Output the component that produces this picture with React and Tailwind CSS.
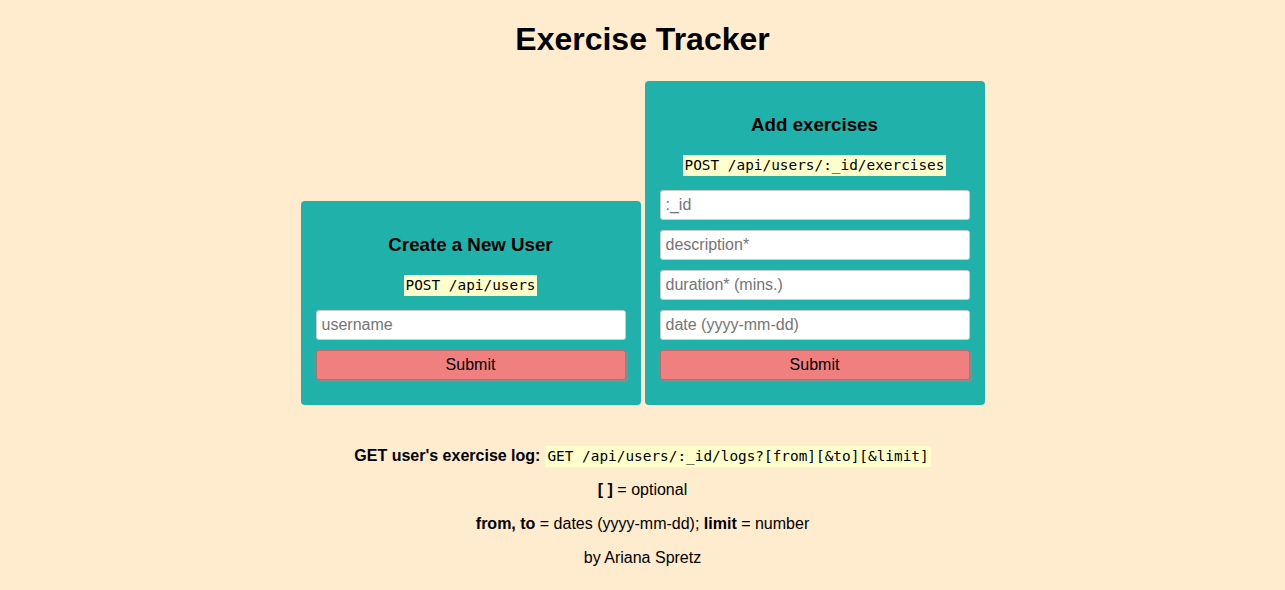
import React from 'react';

const sans = { fontFamily: '"Liberation Sans", Arial, sans-serif' };

function Code({ children }) {
  return (
    <code className="block bg-[#ffffcc] px-[2px] h-[21px] leading-[21px] text-[14.4px] text-black font-['DejaVu_Sans_Mono',monospace]">
      {children}
    </code>
  );
}

function Field({ placeholder }) {
  return (
    <input
      type="text"
      placeholder={placeholder}
      className="block w-[310px] h-[30px] px-[5px] bg-white border border-[#ccc] rounded-[3px] text-[16px] text-black placeholder:text-[#757575] outline-none"
      style={sans}
    />
  );
}

function SubmitButton() {
  return (
    <button
      type="button"
      className="block w-[310px] h-[30px] bg-[#f08080] rounded-[3px] text-[16px] text-black shadow-[2px_2px_0_#8a8a8a] border border-[#c06a6a]"
      style={sans}
    >
      Submit
    </button>
  );
}

function Card({ title, endpoint, fields }) {
  return (
    <div className="w-[340px] bg-[#20b2aa] rounded-[4px] pt-[33px] pb-[25px] px-[15px] flex flex-col items-center">
      <h3 className="text-[18.72px] font-bold leading-[22px] text-black">{title}</h3>
      <div className="mt-[19px] flex">
        <Code>{endpoint}</Code>
      </div>
      <div className="mt-[14px] flex flex-col gap-[10px]">
        {fields.map((f) => (
          <Field key={f} placeholder={f} />
        ))}
        <SubmitButton />
      </div>
    </div>
  );
}

export default function App() {
  return (
    <div className="min-h-[590px] bg-[#ffebcd] text-black text-[16px]" style={sans}>
      <h1 className="pt-[21px] text-[32px] font-bold leading-[37px] text-center">Exercise Tracker</h1>

      <div className="mt-[23px] flex justify-center items-end gap-[4px]">
        <Card title="Create a New User" endpoint="POST /api/users" fields={['username']} />
        <Card
          title="Add exercises"
          endpoint="POST /api/users/:_id/exercises"
          fields={[':_id', 'description*', 'duration* (mins.)', 'date (yyyy-mm-dd)']}
        />
      </div>

      <div className="mt-[42px] flex flex-col items-center gap-[16px] leading-[18px] pb-[25px]">
        <p className="h-[18px] flex items-center">
          <strong>GET user's exercise log:</strong>
          <span className="ml-[5px] flex">
            <Code>GET /api/users/:_id/logs?[from][&amp;to][&amp;limit]</Code>
          </span>
        </p>
        <p>
          <strong>[ ]</strong> = optional
        </p>
        <p>
          <strong>from, to</strong> = dates (yyyy-mm-dd); <strong>limit</strong> = number
        </p>
        <p>by Ariana Spretz</p>
      </div>
    </div>
  );
}
